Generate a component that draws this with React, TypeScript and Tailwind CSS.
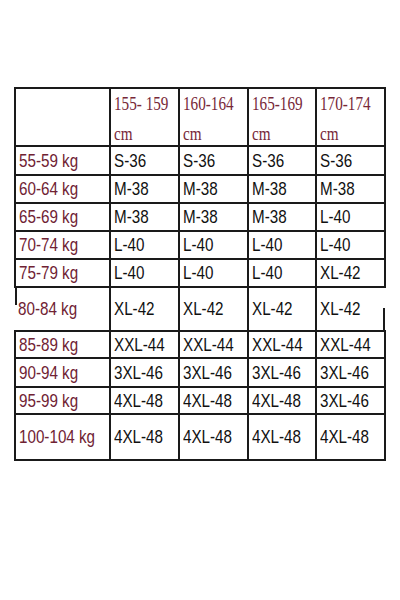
const heights = ["155- 159", "160-164", "165-169", "170-174"]

type Row = {
  kg: string
  sizes: string[]
  h: string
  gap?: boolean
}

const rows: Row[] = [
  { kg: "55-59 kg", sizes: ["S-36", "S-36", "S-36", "S-36"], h: "h-[29px]" },
  { kg: "60-64 kg", sizes: ["M-38", "M-38", "M-38", "M-38"], h: "h-[28px]" },
  { kg: "65-69 kg", sizes: ["M-38", "M-38", "M-38", "L-40"], h: "h-[28px]" },
  { kg: "70-74 kg", sizes: ["L-40", "L-40", "L-40", "L-40"], h: "h-[28px]" },
  { kg: "75-79 kg", sizes: ["L-40", "L-40", "L-40", "XL-42"], h: "h-[28px]" },
  { kg: "80-84 kg", sizes: ["XL-42", "XL-42", "XL-42", "XL-42"], h: "h-[44px]", gap: true },
  { kg: "85-89 kg", sizes: ["XXL-44", "XXL-44", "XXL-44", "XXL-44"], h: "h-[27px]" },
  { kg: "90-94 kg", sizes: ["3XL-46", "3XL-46", "3XL-46", "3XL-46"], h: "h-[29px]" },
  { kg: "95-99 kg", sizes: ["4XL-48", "4XL-48", "4XL-48", "3XL-46"], h: "h-[27px]" },
  { kg: "100-104 kg", sizes: ["4XL-48", "4XL-48", "4XL-48", "4XL-48"], h: "h-[46px]" },
]

function Sans({ text, red }: { text: string; red?: boolean }) {
  return (
    <span
      className={`inline-block whitespace-nowrap origin-left scale-x-[0.8] font-['Liberation_Sans',Arial,sans-serif] text-[19px] leading-none ${
        red ? "text-[#6f2233]" : "text-[#111111]"
      }`}
    >
      {text}
    </span>
  )
}

export default function App() {
  return (
    <div className="w-[400px] h-[600px] bg-white overflow-hidden">
      <table className="table-fixed border-collapse ml-[14px] mt-[87px] w-[370px]">
        <colgroup>
          <col className="w-[95px]" />
          <col className="w-[69px]" />
          <col className="w-[69px]" />
          <col className="w-[68px]" />
          <col className="w-[69px]" />
        </colgroup>
        <thead>
          <tr className="h-[58px]">
            <th className="border-2 border-[#1a1a1a] p-0"></th>
            {heights.map((h) => (
              <th
                key={h}
                className="border-2 border-[#1a1a1a] pl-[3px] p-0 align-top text-left font-normal font-['Liberation_Serif','Times_New_Roman',serif] text-[19px] leading-[30px] text-[#772838]"
              >
                <div className="h-[30px] whitespace-nowrap origin-left scale-x-[0.8]">{h}</div>
                <div className="h-[24px] whitespace-nowrap origin-left scale-x-[0.8]">cm</div>
              </th>
            ))}
          </tr>
        </thead>
        <tbody>
          {rows.map((r) => (
            <tr key={r.kg} className={r.h}>
              <td
                className={`border-2 border-[#1a1a1a] pl-[3px] py-0 align-middle ${
                  r.gap
                    ? "border-l-0 bg-[linear-gradient(#1a1a1a,#1a1a1a)] bg-no-repeat bg-[length:2px_17px] bg-left-top"
                    : ""
                }`}
              >
                <Sans text={r.kg} red />
              </td>
              {r.sizes.map((s, i) => (
                <td
                  key={i}
                  className={`border-2 border-[#1a1a1a] pl-[3px] py-0 align-middle ${
                    r.gap && i === 3
                      ? "border-r-0 bg-[linear-gradient(#1a1a1a,#1a1a1a)] bg-no-repeat bg-[length:2px_22px] bg-right-bottom"
                      : ""
                  }`}
                >
                  <Sans text={s} />
                </td>
              ))}
            </tr>
          ))}
        </tbody>
      </table>
    </div>
  )
}
